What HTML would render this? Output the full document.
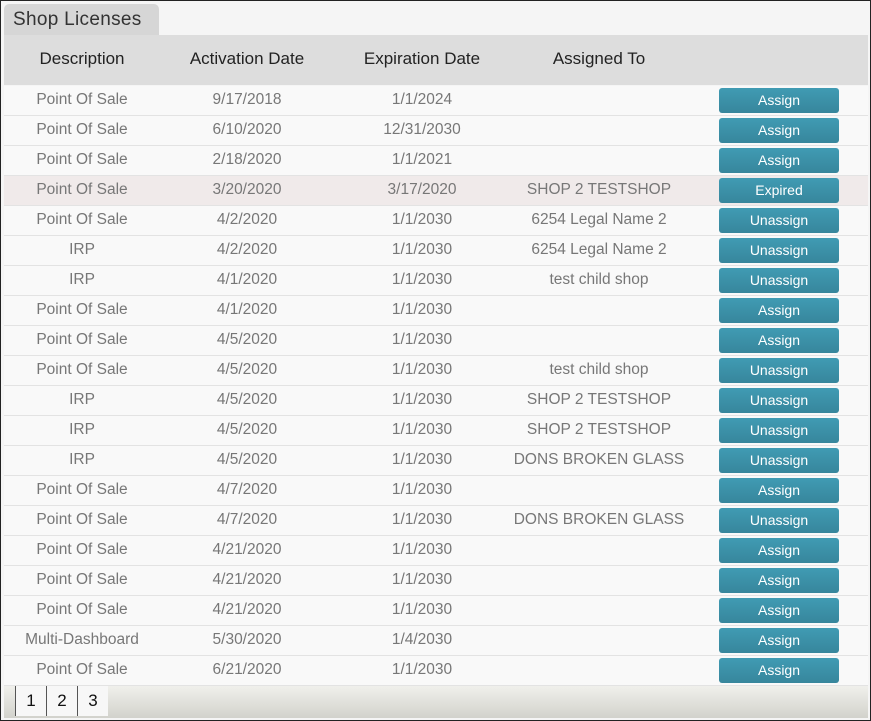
<!DOCTYPE html>
<html><head><style>
body{margin:0;width:871px;height:721px;overflow:hidden;background:#fff;font-family:"Liberation Sans",sans-serif;}
#f{position:absolute;left:0;top:0;width:869px;height:719px;border:1px solid #222;background:#f5f5f5;}
#tab{position:absolute;left:3px;top:3px;width:155px;height:31px;background:#d6d6d6;border-radius:5px 5px 0 0;font-size:19px;color:#333;line-height:32px;padding-left:9px;box-sizing:border-box;letter-spacing:0.3px}
#hd{position:absolute;left:3px;top:34px;width:864px;height:50px;background:#dddddd;font-size:17px;color:#222;}
.c{position:absolute;text-align:center;white-space:nowrap;}
.r{position:absolute;left:3px;width:864px;height:30px;background:#f9f9f9;border-bottom:1px solid #e3e3e3;box-sizing:border-box;font-size:15.5px;color:#777;}
.r .c{top:5px;}
.b{position:absolute;left:715px;top:2px;width:120px;height:25px;border-radius:3px;background:linear-gradient(#409bb3,#37869c);color:#fff;font-size:14px;line-height:25px;text-align:center;}
#pg{position:absolute;left:3px;top:685px;width:864px;height:32px;background:linear-gradient(#f0f0ec,#d2d2cc);}
.p{position:absolute;top:0;width:30px;height:30px;background:#f7f7f7;border-left:1px solid #555;text-align:center;line-height:30px;font-size:17px;color:#111}
</style></head><body><div id="f">
<div id="tab">Shop Licenses</div>
<div id="hd">
<div class="c" style="left:0;width:156px;top:14px">Description</div>
<div class="c" style="left:163px;width:160px;top:14px">Activation Date</div>
<div class="c" style="left:338px;width:160px;top:14px">Expiration Date</div>
<div class="c" style="left:515px;width:160px;top:14px">Assigned To</div>
</div>
<div id="rows"></div>
<div id="pg"><div class="p" style="left:11px">1</div><div class="p" style="left:42px">2</div><div class="p" style="left:73px">3</div></div>
</div>
<script>
var d=[["Point Of Sale","9/17/2018","1/1/2024","","Assign"],["Point Of Sale","6/10/2020","12/31/2030","","Assign"],["Point Of Sale","2/18/2020","1/1/2021","","Assign"],["Point Of Sale","3/20/2020","3/17/2020","SHOP 2 TESTSHOP","Expired"],["Point Of Sale","4/2/2020","1/1/2030","6254 Legal Name 2","Unassign"],["IRP","4/2/2020","1/1/2030","6254 Legal Name 2","Unassign"],["IRP","4/1/2020","1/1/2030","test child shop","Unassign"],["Point Of Sale","4/1/2020","1/1/2030","","Assign"],["Point Of Sale","4/5/2020","1/1/2030","","Assign"],["Point Of Sale","4/5/2020","1/1/2030","test child shop","Unassign"],["IRP","4/5/2020","1/1/2030","SHOP 2 TESTSHOP","Unassign"],["IRP","4/5/2020","1/1/2030","SHOP 2 TESTSHOP","Unassign"],["IRP","4/5/2020","1/1/2030","DONS BROKEN GLASS","Unassign"],["Point Of Sale","4/7/2020","1/1/2030","","Assign"],["Point Of Sale","4/7/2020","1/1/2030","DONS BROKEN GLASS","Unassign"],["Point Of Sale","4/21/2020","1/1/2030","","Assign"],["Point Of Sale","4/21/2020","1/1/2030","","Assign"],["Point Of Sale","4/21/2020","1/1/2030","","Assign"],["Multi-Dashboard","5/30/2020","1/4/2030","","Assign"],["Point Of Sale","6/21/2020","1/1/2030","","Assign"]];
var h="";d.forEach(function(r,i){h+='<div class="r" style="top:'+(85+i*30)+'px'+(r[4]=="Expired"?';background:#f0eaea':'')+'"><div class="c" style="left:0;width:156px">'+r[0]+'</div><div class="c" style="left:163px;width:160px">'+r[1]+'</div><div class="c" style="left:338px;width:160px">'+r[2]+'</div><div class="c" style="left:495px;width:200px">'+r[3]+'</div><div class="b">'+r[4]+'</div></div>';});
document.getElementById("rows").innerHTML=h;
</script>
</body></html>
